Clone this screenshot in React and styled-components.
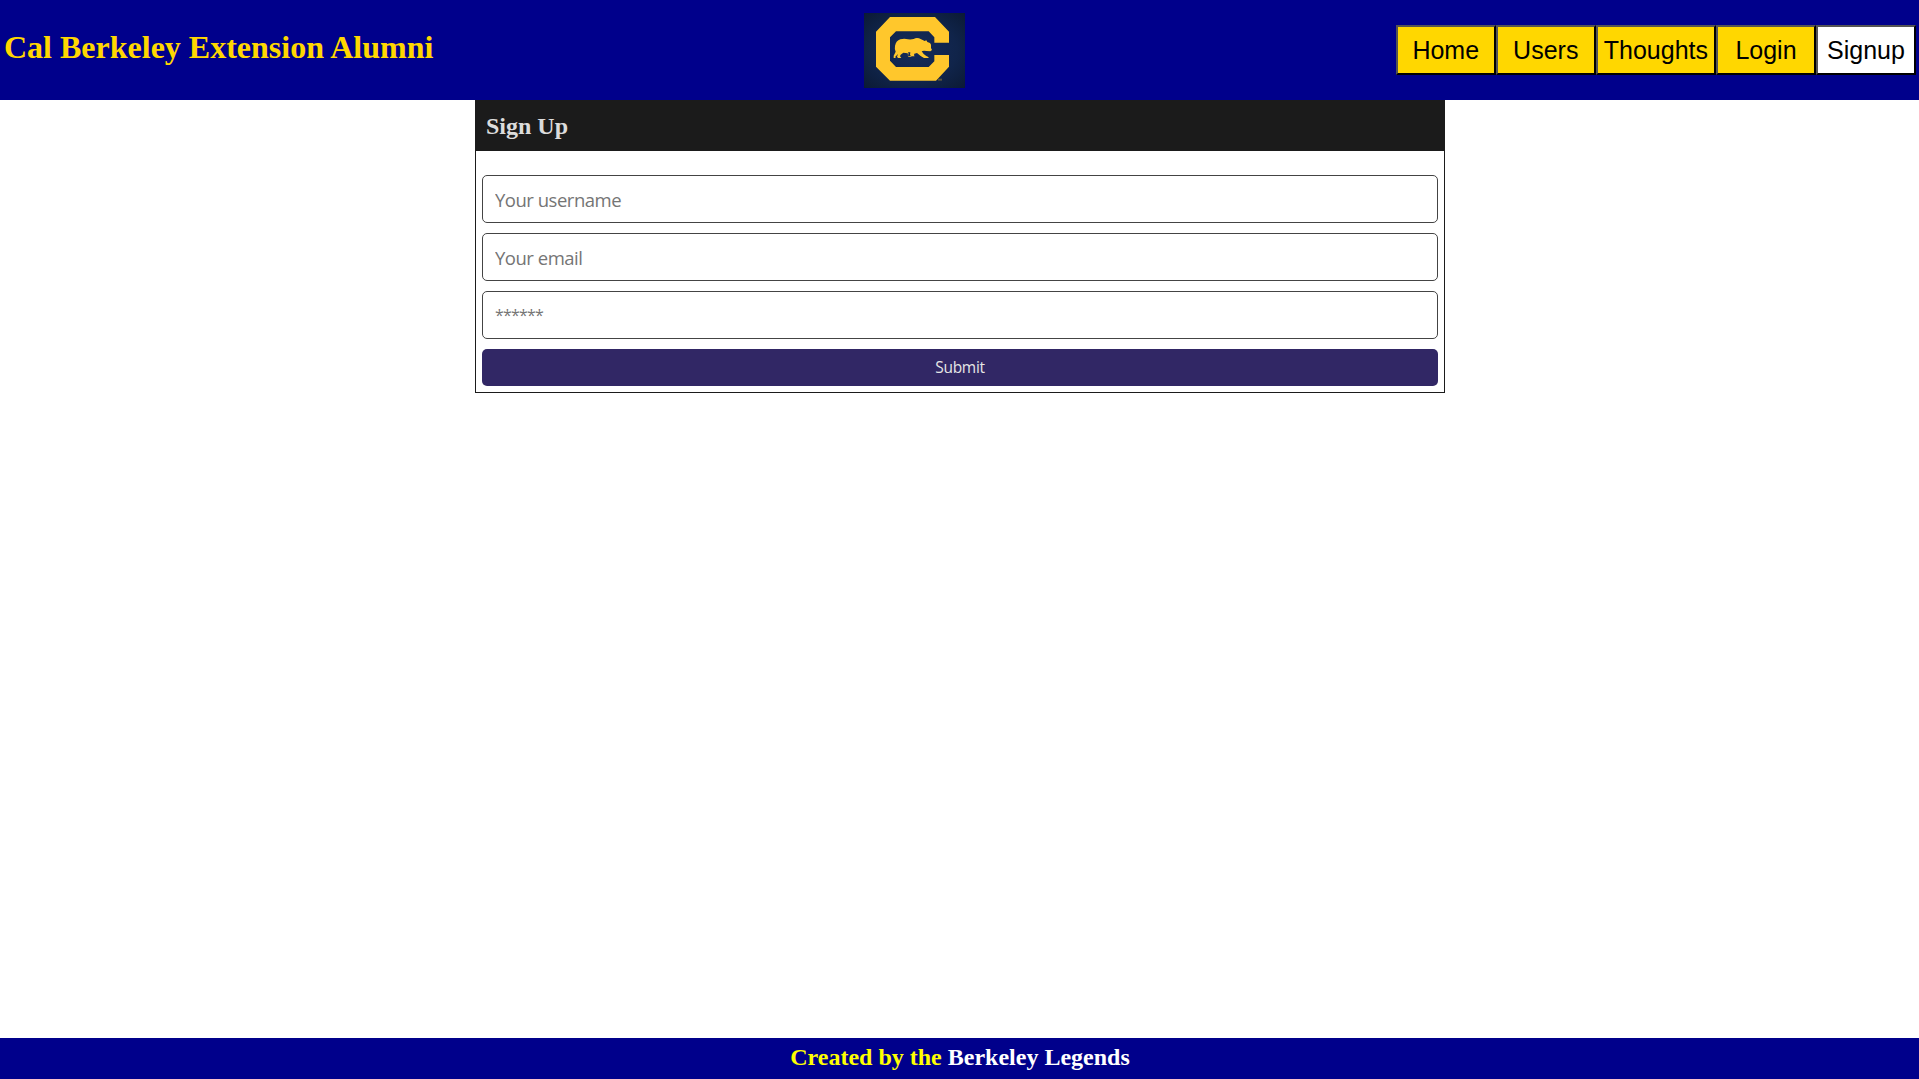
import React from "react";
import styled, { createGlobalStyle } from "styled-components";

const GlobalStyle = createGlobalStyle`
  *, *::before, *::after { box-sizing: border-box; }
  body {
    margin: 0;
    background: #fff;
    font-family: "Liberation Serif", "Times New Roman", serif;
  }
`;

const Page = styled.div`
  display: flex;
  flex-direction: column;
  min-height: 100vh;
`;

const Header = styled.header`
  display: grid;
  grid-template-columns: 864px 101px 1fr;
  height: 100px;
  background: #00008b;
`;

const Title = styled.h1`
  margin: 0;
  padding: 29px 0 0 4px;
  font-size: 32px;
  line-height: 37px;
  color: #ffd700;
`;

const Logo = styled.svg`
  display: block;
  width: 101px;
  height: 75px;
  margin-top: 13px;
`;

const Nav = styled.nav`
  display: flex;
  justify-content: flex-end;
  padding: 25px 3px 0 0;
`;

const NavButton = styled.button`
  min-width: 100px;
  height: 50px;
  padding: 2px 6px 1px;
  border: 2px outset #000;
  background: ${(p) => (p.$active ? "#fff" : "#ffd700")};
  color: #000;
  font: 25px "Liberation Sans", Arial, sans-serif;
`;

const Main = styled.main`
  flex: 1;
  display: flex;
  justify-content: center;
  align-items: flex-start;
  padding-left: 1px;
`;

const Card = styled.section`
  width: 970px;
  border: 1px solid #1b1b1b;
`;

const CardTitle = styled.h2`
  margin: 0;
  height: 50px;
  padding: 11px 10px 0;
  background: #1b1b1b;
  color: #dcdcdc;
  font-size: 24px;
  line-height: 28px;
`;

const Form = styled.form`
  display: flex;
  flex-direction: column;
  gap: 10px;
  padding: 24px 6px 6px;
`;

const Field = styled.input`
  height: 48px;
  padding: 0 12px;
  border: 1px solid #444;
  border-radius: 5px;
  background: #fff;
  color: #222;
  font: 18.5px "Open Sans", "Segoe UI", sans-serif;
  letter-spacing: -0.49px;
  &::placeholder { color: #757575; opacity: 1; }
  &[type="password"] {
    font-size: 16px;
    letter-spacing: -0.8px;
  }
`;

const Submit = styled.button`
  height: 37px;
  padding: 0 0 2px;
  border: 0;
  border-radius: 5px;
  background: #312765;
  color: #e6e6e6;
  font: 15.5px "Open Sans", "Segoe UI", sans-serif;
  letter-spacing: -0.3px;
`;

const Footer = styled.footer`
  height: 41px;
  padding: 5px 0 0 1px;
  background: #00008b;
  color: #ff0;
  text-align: center;
  font-size: 24px;
  font-weight: bold;
  line-height: 28px;
`;

const Team = styled.span`
  color: #fff;
`;

const links = ["Home", "Users", "Thoughts", "Login", "Signup"];

function BearLogo() {
  return (
    <Logo viewBox="42 39 303 225" preserveAspectRatio="none" role="img" aria-label="Cal">
      <defs>
        <radialGradient id="navy" cx="50%" cy="50%" r="70%">
          <stop offset="0" stopColor="#142b5a" />
          <stop offset="0.6" stopColor="#10244a" />
          <stop offset="1" stopColor="#0b1a35" />
        </radialGradient>
      </defs>
      <rect x="42" y="39" width="303" height="225" fill="url(#navy)" />
      <path
        fill="#ffc72c"
        d="M120 51H255L297 95V128H253V112L236 94H138L120 112V182L138 201H236L253 184V165H297V200L258 242H120L78 200V95Z"
      />
      <path
        fill="#ffc72c"
        d="M135 138Q138 122 151 118Q163 115 174 118Q184 119 191 117Q199 112 207 115L218 120L224 123L229 121L232 126L240 129L243 134L243 144L246 150L241 154L230 153L222 152L215 154L221 162L229 168L235 171L236 174L222 174L212 168L201 159L193 161L192 166L194 169L185 169L180 166L181 157L174 157L176 162L173 166L176 168H184V170H175L173 160L160 158L152 164L150 169L154 174L144 174L141 170L144 162L136 170L137 174H131L131 167L137 155Q133 148 135 138Z"
      />
      <path d="M264 236h12v6h-12z" fill="#8a7434" opacity="0.6" />
    </Logo>
  );
}

export default function App() {
  return (
    <Page>
      <GlobalStyle />
      <Header>
        <Title>Cal Berkeley Extension Alumni</Title>
        <BearLogo />
        <Nav>
          {links.map((label) => (
            <NavButton key={label} $active={label === "Signup"}>{label}</NavButton>
          ))}
        </Nav>
      </Header>
      <Main>
        <Card>
          <CardTitle>Sign Up</CardTitle>
          <Form onSubmit={(e) => e.preventDefault()}>
            <Field placeholder="Your username" />
            <Field type="email" placeholder="Your email" />
            <Field type="password" placeholder="******" />
            <Submit>Submit</Submit>
          </Form>
        </Card>
      </Main>
      <Footer>
        Created by the <Team>Berkeley Legends</Team>
      </Footer>
    </Page>
  );
}
